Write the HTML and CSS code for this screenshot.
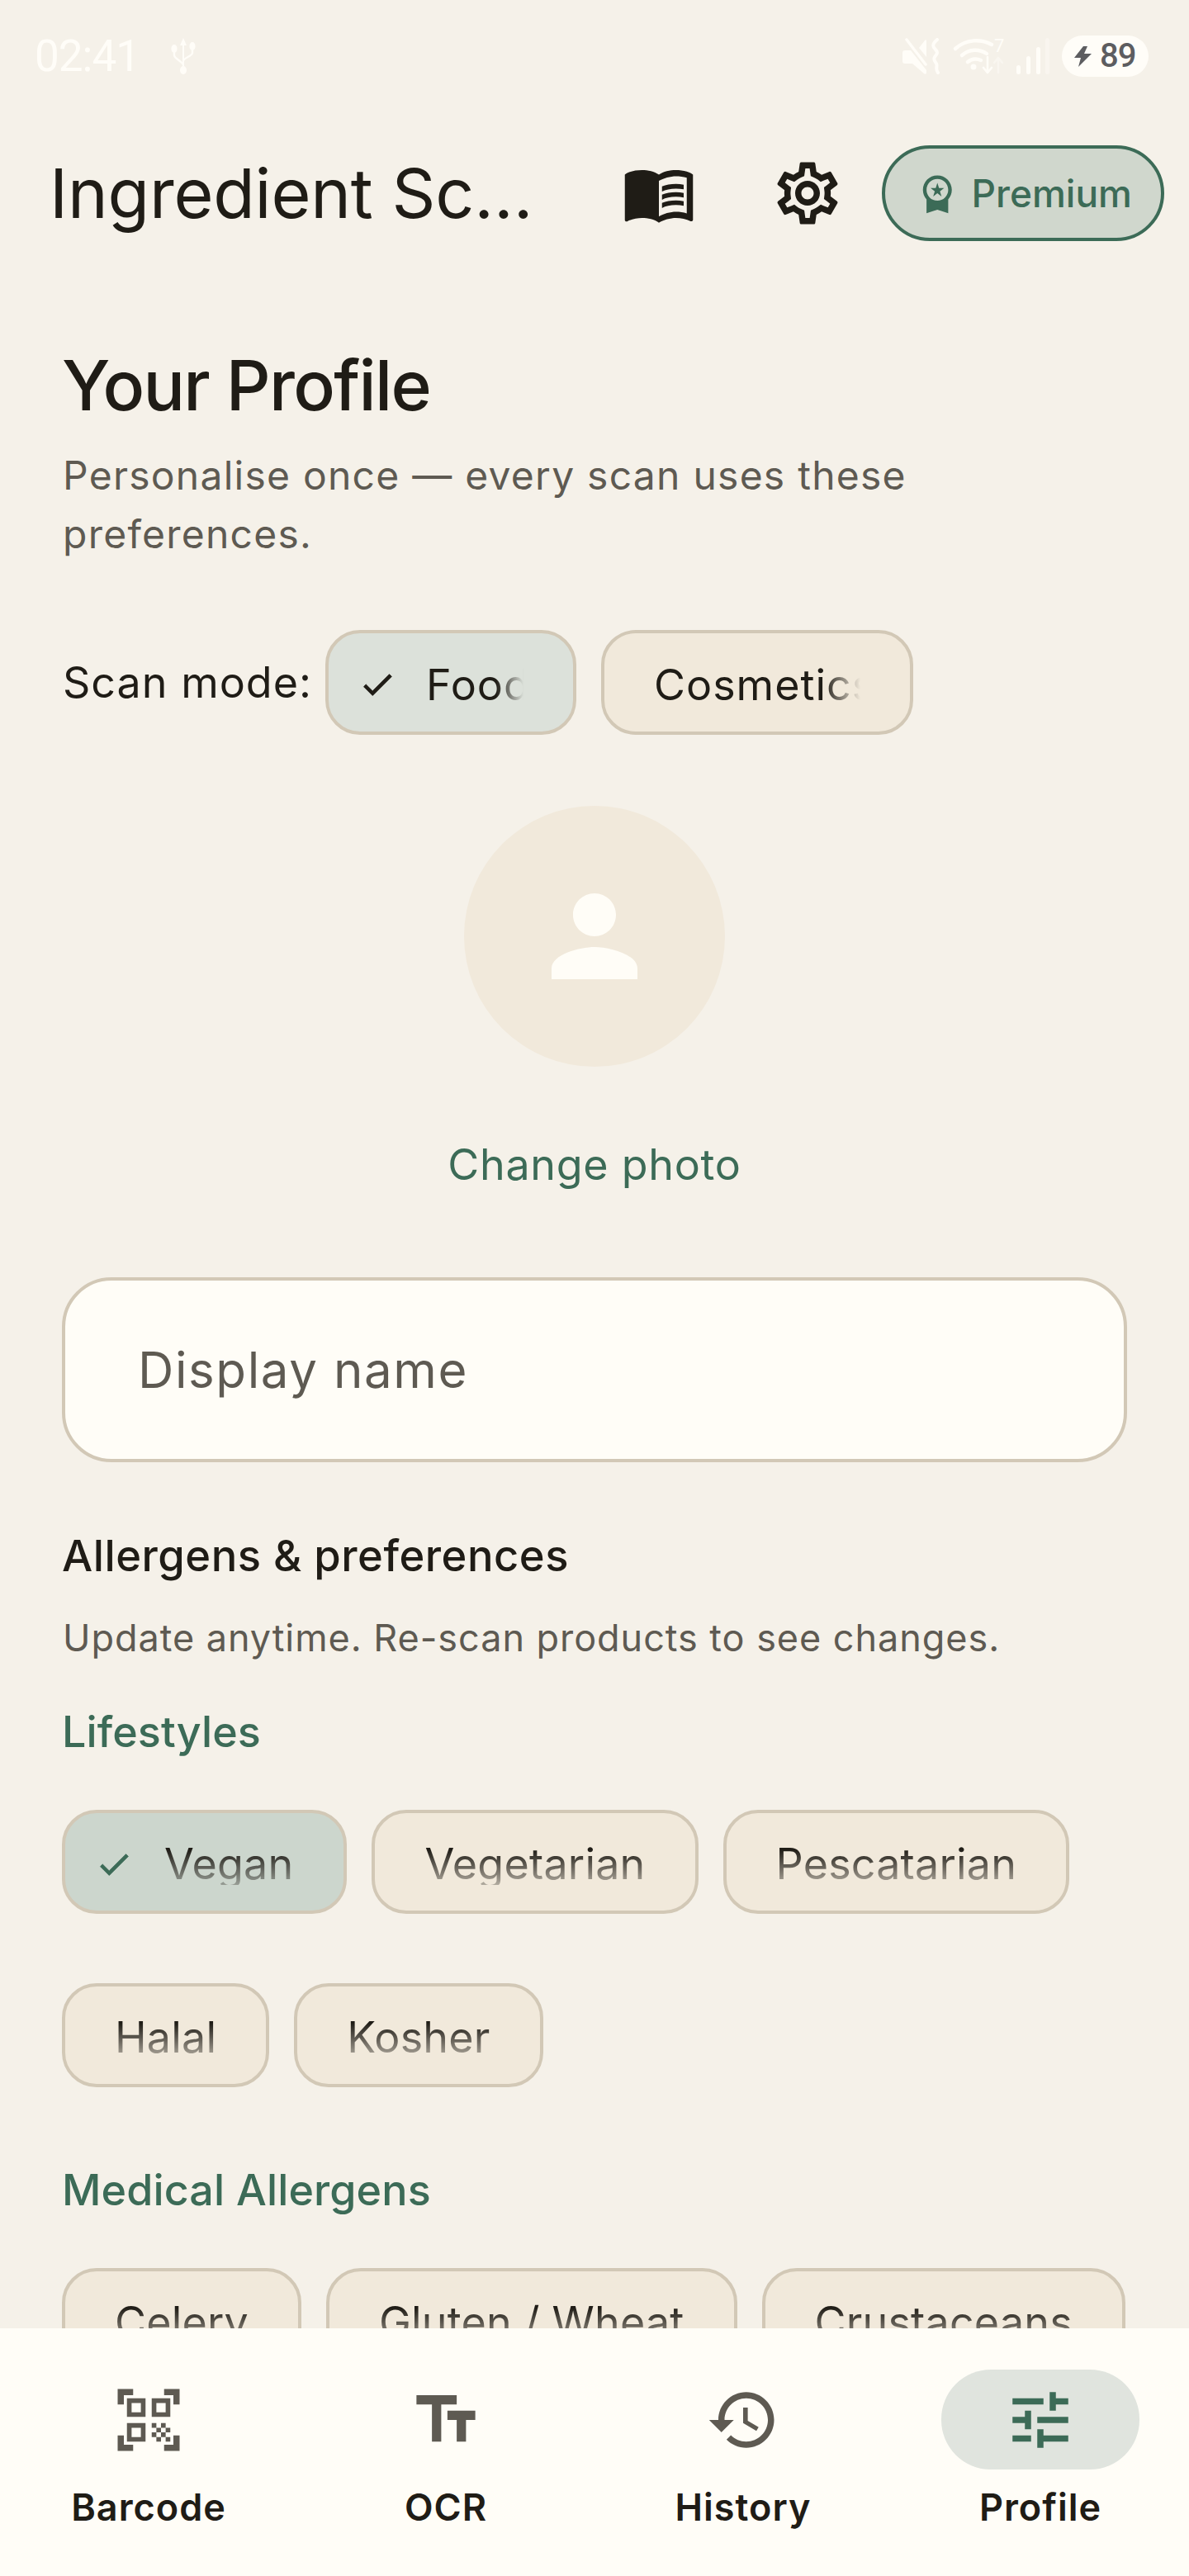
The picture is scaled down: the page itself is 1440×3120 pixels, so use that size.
FILE: index.html
```html
<!DOCTYPE html>
<html lang="en">
<head>
<meta charset="utf-8">
<title>Ingredient Scanner</title>
<link rel="stylesheet" href="styles.css">
</head>
<body>
<div class="app">
  <div class="status">
    <div class="status-left">
      <span class="time">02:41</span>
      <svg class="usb" viewBox="0 0 30 44"><path d="M15 0l-4 9h3v25h2V9h3z" fill="#fffdf8"/><g fill="none" stroke="#fffdf8" stroke-width="2.4"><path d="M4 16v5c0 4 11 8 11 12"/><path d="M26 13v5c0 4-11 6-11 10"/></g><g fill="#fffdf8"><ellipse cx="15" cy="39" rx="4" ry="5"/><ellipse cx="4" cy="13" rx="3.6" ry="5"/><ellipse cx="26" cy="10" rx="3.6" ry="5"/></g></svg>
    </div>
    <div class="status-right">
      <svg class="mute" viewBox="0 0 46 44"><g fill="#fffdf8"><path d="M3 15h7l19 24v3c0 2-2 2-3 1L12 31H3c-2 0-3-1-3-3V18c0-2 1-3 3-3z"/><path d="M20 12l7-9c1-1 2-1 2 1v19z"/></g><g fill="none" stroke="#fffdf8" stroke-linecap="round"><path d="M5 2l23 30" stroke-width="3.5"/><path d="M42 2c-7 6-5 9-2 12 4 4 1 6-1 9-2 3 0 5 2 8 2 3-2 6 2 11" stroke-width="4"/></g></svg>
      <svg class="wifi" viewBox="0 0 62 44"><g fill="none" stroke="#fffdf8" stroke-width="4.5" stroke-linecap="round"><path d="M3 13C16 1 34 1 47 8"/><path d="M11 21c9-8 21-8 30-2"/><path d="M18 29c5-4 11-4 16-2"/></g><circle cx="25" cy="35" r="3.5" fill="#fffdf8"/><text x="50" y="17" class="wifi-num">7</text><g fill="none" stroke-linecap="round" stroke-linejoin="round" stroke-width="2.6"><path d="M42 23v19m-5-6l5 6 5-6" stroke="#fffdf8"/><path d="M55 42V24m-5 6l5-6 5 6" stroke="#fffdf8" opacity=".45"/></g></svg>
      <svg class="signal" viewBox="0 0 41 44"><g fill="#fffdf8"><rect x="1" y="33" width="5" height="11" rx="2.5"/><rect x="13" y="22" width="5" height="22" rx="2.5"/><rect x="25" y="11" width="5" height="33" rx="2.5"/><rect x="36" y="0" width="5" height="44" rx="2.5" opacity=".4"/></g></svg>
      <div class="battery">
        <svg class="bolt" viewBox="0 0 21 25"><path d="M11 0L0 14h8L5 25l16-16h-9l4-9z" fill="#5d5d60"/></svg>
        <span class="batt-num">89</span>
      </div>
    </div>
  </div>

  <header class="topbar">
    <h1 class="app-title">Ingredient Sc…</h1>
    <div class="icon-btn">
      <svg class="icon-90 ink" viewBox="0 0 24 24"><path d="M21 5c-1.11-.35-2.33-.5-3.5-.5-1.95 0-4.05.4-5.5 1.5-1.45-1.1-3.55-1.5-5.5-1.5S2.45 4.9 1 6v14.65c0 .25.25.5.5.5.1 0 .15-.05.25-.05C3.1 20.45 5.05 20 6.5 20c1.95 0 4.05.4 5.5 1.5 1.35-.85 3.8-1.5 5.5-1.5 1.65 0 3.35.3 4.75 1.05.1.05.15.05.25.05.25 0 .5-.25.5-.5V6c-.6-.45-1.25-.75-2-1zm0 13.5c-1.1-.35-2.3-.5-3.5-.5-1.7 0-4.15.65-5.5 1.5V8c1.35-.85 3.8-1.5 5.5-1.5 1.2 0 2.4.15 3.5.5v11.5z"/><path d="M17.5 10.5c.88 0 1.73.09 2.5.26V9.24c-.79-.15-1.64-.24-2.5-.24-1.7 0-3.24.29-4.5.83v1.66c1.13-.64 2.7-.99 4.5-.99zM13 12.49v1.66c1.13-.64 2.7-.99 4.5-.99.88 0 1.73.09 2.5.26V11.9c-.79-.15-1.64-.24-2.5-.24-1.7 0-3.24.3-4.5.83zm4.5 1.84c-1.7 0-3.24.29-4.5.83v1.66c1.13-.64 2.7-.99 4.5-.99.88 0 1.73.09 2.5.26v-1.52c-.79-.16-1.64-.24-2.5-.24z"/></svg>
    </div>
    <div class="icon-btn">
      <svg class="icon-90 ink" viewBox="0 0 24 24"><path d="M19.43 12.98c.04-.32.07-.64.07-.98 0-.34-.03-.66-.07-.98l2.11-1.65c.19-.15.24-.42.12-.64l-2-3.46c-.09-.16-.26-.25-.44-.25-.06 0-.12.01-.17.03l-2.49 1c-.52-.4-1.08-.73-1.69-.98l-.38-2.65C14.46 2.18 14.25 2 14 2h-4c-.25 0-.46.18-.49.42l-.38 2.65c-.61.25-1.17.59-1.69.98l-2.49-1c-.06-.02-.12-.03-.18-.03-.17 0-.34.09-.43.25l-2 3.46c-.13.22-.07.49.12.64l2.11 1.65c-.04.32-.07.65-.07.98 0 .33.03.66.07.98l-2.11 1.65c-.19.15-.24.42-.12.64l2 3.46c.09.16.26.25.44.25.06 0 .12-.01.17-.03l2.49-1c.52.4 1.08.73 1.69.98l.38 2.65c.03.24.24.42.49.42h4c.25 0 .46-.18.49-.42l.38-2.65c.61-.25 1.17-.59 1.69-.98l2.49 1c.06.02.12.03.18.03.17 0 .34-.09.43-.25l2-3.46c.12-.22.07-.49-.12-.64l-2.11-1.65zm-1.98-1.71c.04.31.05.52.05.73 0 .21-.02.43-.05.73l-.14 1.13.89.7 1.08.84-.7 1.21-1.27-.51-1.04-.42-.9.68c-.43.32-.84.56-1.25.73l-1.06.43-.16 1.13-.2 1.35h-1.4l-.19-1.35-.16-1.13-1.06-.43c-.43-.18-.83-.41-1.23-.71l-.91-.7-1.06.43-1.27.51-.7-1.21 1.08-.84.89-.7-.14-1.13c-.03-.31-.05-.54-.05-.74s.02-.43.05-.73l.14-1.13-.89-.7-1.08-.84.7-1.21 1.27.51 1.04.42.9-.68c.43-.32.84-.56 1.25-.73l1.06-.43.16-1.13.2-1.35h1.39l.19 1.35.16 1.13 1.06.43c.43.18.83.41 1.23.71l.91.7 1.06-.43 1.27-.51.7 1.21-1.07.85-.89.7.14 1.13zM12 8c-2.21 0-4 1.79-4 4s1.79 4 4 4 4-1.79 4-4-1.79-4-4-4zm0 6c-1.1 0-2-.9-2-2s.9-2 2-2 2 .9 2 2-.9 2-2 2z"/></svg>
    </div>
    <div class="premium">
      <svg class="premium-icon" viewBox="0 0 24 24"><path d="M9.68 13.69 12 11.93l2.31 1.76-.88-2.85L15.75 9h-2.84L12 6.19 11.09 9H8.25l2.31 1.84-.88 2.85zM20 10c0-4.42-3.58-8-8-8s-8 3.58-8 8c0 2.03.76 3.87 2 5.28V23l6-2 6 2v-7.72c1.24-1.41 2-3.25 2-5.28zM12 4c3.31 0 6 2.69 6 6s-2.69 6-6 6-6-2.69-6-6 2.69-6 6-6z"/></svg>
      <span>Premium</span>
    </div>
  </header>

  <main class="content">
    <h2 class="page-title">Your Profile</h2>
    <p class="page-sub">Personalise once — every scan uses these preferences.</p>

    <div class="mode-row">
      <span class="mode-label">Scan mode:</span>
      <div class="chip chip-mode chip-on-soft">
        <svg class="check ink" viewBox="0 0 24 24"><path d="M9 16.17 4.83 12l-1.42 1.41L9 19 21 7l-1.41-1.41z"/></svg>
        <span class="chip-text fade-x fade-food">Food</span>
      </div>
      <div class="chip chip-mode">
        <span class="chip-text fade-x fade-cos">Cosmetics</span>
      </div>
    </div>

    <div class="avatar-wrap">
      <div class="avatar">
        <svg class="avatar-icon" viewBox="0 0 24 24"><path d="M12 12c2.21 0 4-1.79 4-4s-1.79-4-4-4-4 1.79-4 4 1.79 4 4 4zm0 2c-2.67 0-8 1.34-8 4v2h16v-2c0-2.66-5.33-4-8-4z"/></svg>
      </div>
      <span class="change-photo">Change photo</span>
    </div>

    <div class="field"><span class="placeholder">Display name</span></div>

    <h3 class="section-title">Allergens &amp; preferences</h3>
    <p class="section-sub">Update anytime. Re-scan products to see changes.</p>

    <h4 class="group-title group-first">Lifestyles</h4>
    <div class="chips">
      <div class="chip chip-on">
        <svg class="check green" viewBox="0 0 24 24"><path d="M9 16.17 4.83 12l-1.42 1.41L9 19 21 7l-1.41-1.41z"/></svg>
        <span class="chip-text fade-y">Vegan</span>
      </div>
      <div class="chip"><span class="chip-text fade-y">Vegetarian</span></div>
      <div class="chip"><span class="chip-text fade-y">Pescatarian</span></div>
      <div class="chip"><span class="chip-text fade-y">Halal</span></div>
      <div class="chip"><span class="chip-text fade-y">Kosher</span></div>
    </div>

    <h4 class="group-title group-next">Medical Allergens</h4>
    <div class="chips">
      <div class="chip"><span class="chip-text fade-y">Celery</span></div>
      <div class="chip"><span class="chip-text fade-y">Gluten / Wheat</span></div>
      <div class="chip"><span class="chip-text fade-y">Crustaceans</span></div>
    </div>
  </main>

  <nav class="tabs">
    <div class="tab">
      <div class="tab-pill"><svg class="icon-90 muted" viewBox="0 0 24 24"><path d="M9.5 6.5v3h-3v-3h3M11 5H5v6h6V5zm-1.5 9.5v3h-3v-3h3M11 13H5v6h6v-6zm6.5-6.5v3h-3v-3h3M19 5h-6v6h6V5zm-6 8h1.5v1.5H13V13zm1.5 1.5H16V16h-1.5v-1.5zM16 13h1.5v1.5H16V13zm-3 3h1.5v1.5H13V16zm1.5 1.5H16V19h-1.5v-1.5zM16 16h1.5v1.5H16V16zm1.5-1.5H19V16h-1.5v-1.5zm0 3H19V19h-1.5v-1.5zM22 7h-2V4h-3V2h5v5zm0 15v-5h-2v3h-3v2h5zM2 22h5v-2H4v-3H2v5zM2 2v5h2V4h3V2H2z"/></svg></div>
      <span class="tab-label">Barcode</span>
    </div>
    <div class="tab">
      <div class="tab-pill"><svg class="icon-90 muted" viewBox="0 0 24 24"><path d="M2.5 4v3h5v12h3V7h5V4h-13zm19 5h-9v3h3v7h3v-7h3V9z"/></svg></div>
      <span class="tab-label">OCR</span>
    </div>
    <div class="tab">
      <div class="tab-pill"><svg class="icon-90 muted" viewBox="0 0 24 24"><path d="M13 3c-4.97 0-9 4.03-9 9H1l3.89 3.89.07.14L9 12H6c0-3.87 3.13-7 7-7s7 3.13 7 7-3.13 7-7 7c-1.93 0-3.68-.79-4.94-2.06l-1.42 1.42C8.27 19.99 10.51 21 13 21c4.97 0 9-4.03 9-9s-4.03-9-9-9zm-1 5v5l4.28 2.54.72-1.21-3.5-2.08V8H12z"/></svg></div>
      <span class="tab-label">History</span>
    </div>
    <div class="tab">
      <div class="tab-pill tab-pill-on"><svg class="icon-90 green" viewBox="0 0 24 24"><path d="M3 17v2h6v-2H3zM3 5v2h10V5H3zm10 16v-2h8v-2h-8v-2h-2v6h2zM7 9v2H3v2h4v2h2V9H7zm14 4v-2H11v2h10zm-6-4h2V7h4V5h-4V3h-2v6z"/></svg></div>
      <span class="tab-label">Profile</span>
    </div>
  </nav>
</div>
</body>
</html>
```

FILE: styles.css
```css
* { box-sizing: border-box; }
html, body { margin: 0; padding: 0; }
body {
  width: 1440px;
  height: 3120px;
  background: #f5f1e9;
  font-family: "Inter", "Noto Sans", sans-serif;
  color: #1f1c16;
  overflow: hidden;
}
h1, h2, h3, h4, p { margin: 0; font-weight: 400; }

.app { width: 1440px; height: 3120px; display: flex; flex-direction: column; overflow: hidden; }

/* status bar */
.status {
  height: 136px;
  flex: none;
  display: flex;
  justify-content: space-between;
  align-items: center;
  padding: 0 49px 0 42px;
}
.status-left { display: flex; align-items: center; gap: 38px; }
.status-right { display: flex; align-items: center; }
.time {
  font-family: "Roboto", sans-serif;
  font-weight: 400;
  font-size: 53px;
  line-height: 60px;
  letter-spacing: -1px;
  color: #fffdf8;
}
.usb { width: 30px; height: 44px; }
.mute { width: 46px; height: 44px; margin-right: 15px; }
.wifi { width: 62px; height: 44px; margin-right: 14px; overflow: visible; }
.wifi-num { font-family: "Roboto", sans-serif; font-size: 22px; fill: #fffdf8; }
.signal { width: 41px; height: 44px; margin-right: 15px; }
.battery {
  width: 105px;
  height: 50px;
  border-radius: 25px;
  background: #fffdf8;
  display: flex;
  align-items: center;
  padding-left: 15px;
  gap: 10px;
}
.bolt { width: 21px; height: 25px; }
.batt-num {
  font-family: "Roboto", sans-serif;
  font-size: 40px;
  font-weight: 500;
  line-height: 44px;
  letter-spacing: -1px;
  color: #5d5d60;
}

/* app bar */
.topbar {
  height: 196px;
  flex: none;
  display: flex;
  align-items: center;
  padding: 0 30px 0 60px;
}
.app-title {
  flex: 1;
  font-size: 82.5px;
  line-height: 110px;
  letter-spacing: -.2px;
  white-space: nowrap;
  color: #1f1c16;
}
.icon-btn { width: 180px; height: 180px; display: flex; align-items: center; justify-content: center; flex: none; }
.icon-90 { width: 90px; height: 90px; display: block; }
.ink { fill: #1f1c16; }
.muted { fill: #5e5a52; }
.green { fill: #3c6b57; }
.premium {
  flex: none;
  width: 342px;
  height: 116px;
  border: 4px solid #3c6b57;
  border-radius: 58px;
  background: #d0d7cd;
  display: flex;
  align-items: center;
  padding-left: 37px;
  gap: 15px;
  color: #3c6b57;
  font-size: 46px;
  font-weight: 500;
}
.premium-icon { width: 52.5px; height: 52.5px; fill: #3c6b57; flex: none; }

/* main column */
.content { flex: 1; min-height: 0; overflow: hidden; padding: 79px 75px 0; }
.page-title { font-size: 84px; line-height: 112px; font-weight: 500; letter-spacing: -1.7px; }
.page-sub {
  margin-top: 17px;
  font-size: 48px;
  line-height: 71px;
  letter-spacing: 1.25px;
  color: #5e5a52;
  padding-left: 1px;
  width: 1100px;
}

.mode-row { margin-top: 81px; display: flex; align-items: center; gap: 30px; }
.mode-label { font-size: 52px; line-height: 72px; padding-left: 1px; letter-spacing: 1px; margin-right: -14px; }

.chip {
  flex: none;
  height: 126px;
  border: 4px solid #d2c8b6;
  border-radius: 42px;
  background: #f1e9db;
  display: flex;
  align-items: flex-start;
  padding: 26px 60px 0;
  gap: 36px;
}
.chip-on { background: #ccd6cd; padding-left: 36px; padding-right: 61px; gap: 38px; }
.chip-on-soft { background: #dce1da; padding-left: 36px; }
.chip-mode { height: 127px; }
.check { width: 46px; height: 46px; flex: none; margin-top: 13px; stroke-width: .5; }
.check.ink { stroke: #1f1c16; }
.check.green { stroke: #3c6b57; }
.chip-text { display: block; font-size: 52px; line-height: 72px; letter-spacing: .2px; white-space: nowrap; overflow: hidden; }
.fade-y {
  height: 61px;
  -webkit-mask-image: linear-gradient(to bottom, #000 0, #000 18px, rgba(0,0,0,.3) 100%);
  mask-image: linear-gradient(to bottom, #000 0, #000 18px, rgba(0,0,0,.3) 100%);
}
.fade-x { letter-spacing: 1px; margin-top: 1px; }
.fade-food {
  width: 118px;
  -webkit-mask-image: linear-gradient(to right, #000 0, #000 85px, transparent 100%);
  mask-image: linear-gradient(to right, #000 0, #000 85px, transparent 100%);
}
.fade-cos {
  width: 250px;
  -webkit-mask-image: linear-gradient(to right, #000 0, #000 205px, transparent 100%);
  mask-image: linear-gradient(to right, #000 0, #000 205px, transparent 100%);
}

.avatar-wrap { display: flex; flex-direction: column; align-items: center; margin-top: 86px; }
.avatar {
  width: 316px;
  height: 316px;
  border-radius: 50%;
  background: #f1e9db;
  display: flex;
  align-items: center;
  justify-content: center;
}
.avatar-icon { width: 156px; height: 156px; fill: #fffdf7; }
.change-photo { margin-top: 83px; font-size: 52px; line-height: 72px; letter-spacing: .7px; color: #3c6b57; }

.field {
  margin-top: 100px;
  width: 1290px;
  height: 224px;
  border: 4px solid #d2c8b6;
  border-radius: 60px;
  background: #fffdf7;
  display: flex;
  align-items: center;
  padding-left: 88px;
}
.placeholder { font-size: 60px; line-height: 80px; letter-spacing: 1.6px; color: #5e5a52; }

.section-title { margin-top: 77px; font-size: 52.5px; line-height: 72px; font-weight: 500; letter-spacing: .5px; }
.section-sub { margin-top: 34px; font-size: 45px; line-height: 60px; letter-spacing: .95px; color: #5e5a52; padding-left: 1px; }
.group-title { font-size: 52px; line-height: 72px; font-weight: 500; letter-spacing: .1px; color: #3c6b57; }
.group-first { margin-top: 48px; }
.group-next { margin-top: 89px; }
.chips { margin-top: 58px; display: flex; flex-wrap: wrap; column-gap: 30px; row-gap: 84px; }

/* bottom tabs */
.tabs {
  flex: none;
  height: 300px;
  background: #fffdf7;
  display: grid;
  grid-template-columns: repeat(4, 360px);
  padding-top: 50px;
}
.tab { display: flex; flex-direction: column; align-items: center; }
.tab-pill {
  width: 240px;
  height: 121px;
  border-radius: 60px;
  display: flex;
  align-items: center;
  justify-content: center;
}
.tab-pill-on { background: #e0e4de; }
.tab-label { margin-top: 16px; font-size: 45px; line-height: 60px; font-weight: 600; letter-spacing: 1px; }
```
